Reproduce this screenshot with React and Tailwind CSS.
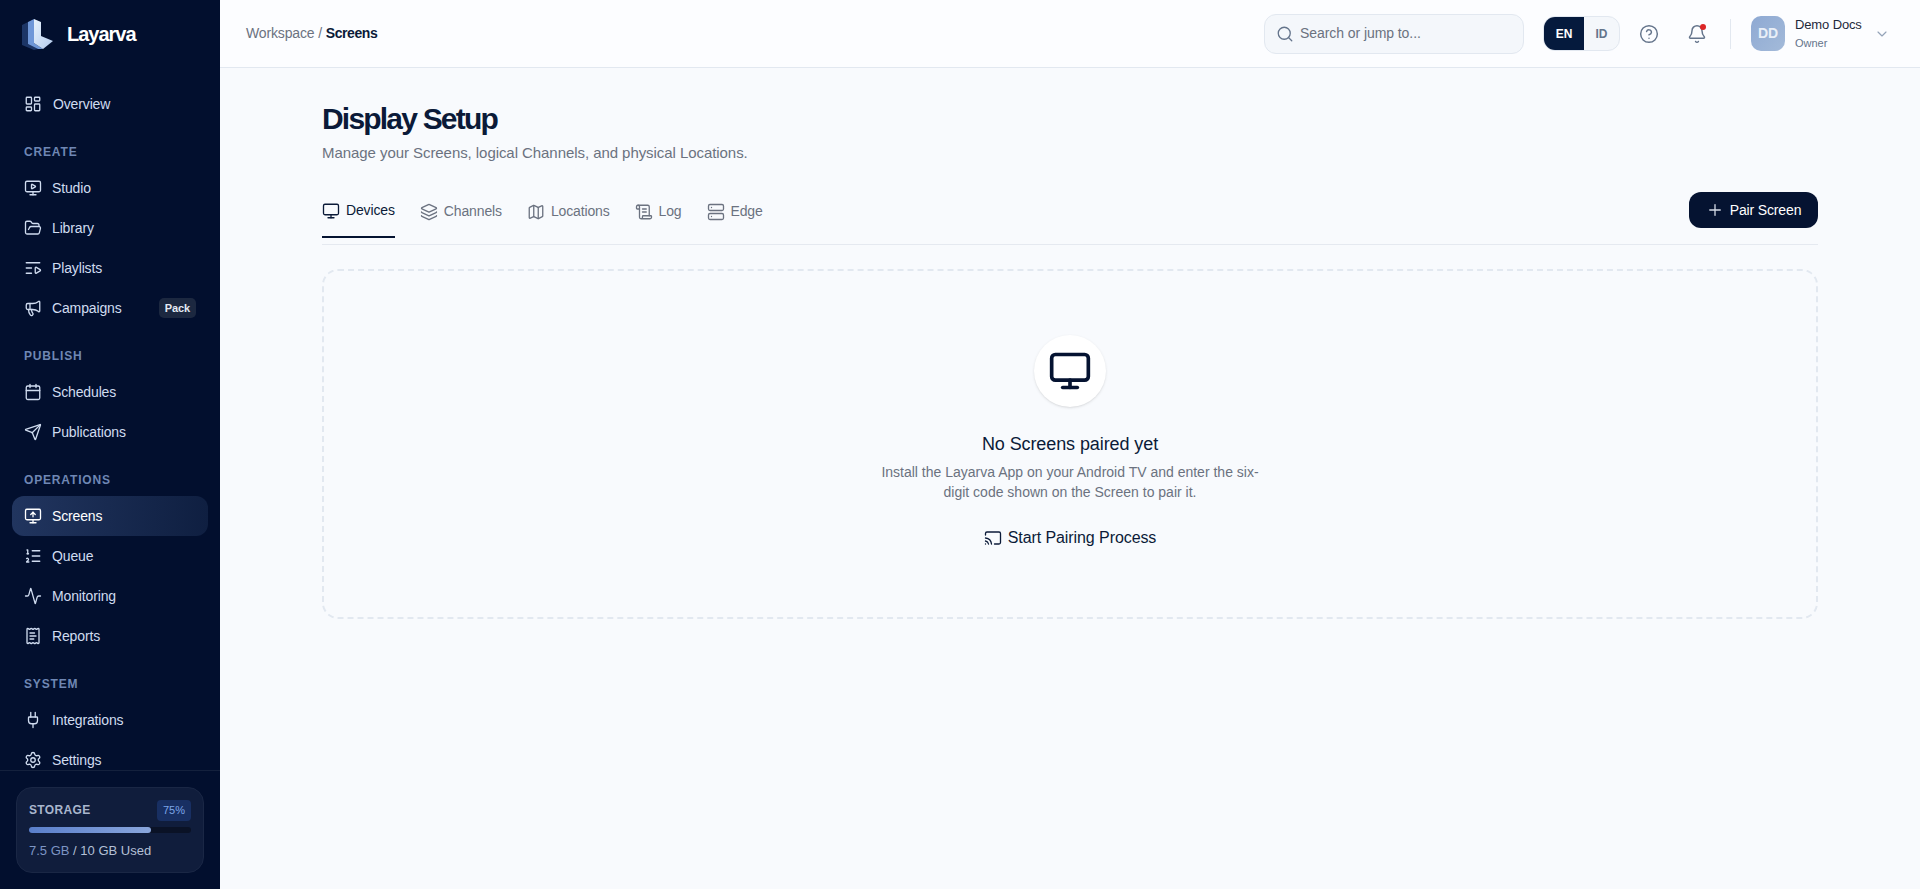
import {
  LayoutDashboard, MonitorPlay, FolderOpen, ListVideo, Megaphone, Calendar, Send, MonitorUp, ListOrdered,
  Activity, ReceiptText, Plug, Settings, Monitor, Layers, Map, ScrollText, Server, Cast, Plus, Search,
  CircleHelp, Bell, ChevronDown,
} from 'lucide-react'

const NAV = [
  { items: [{ label: 'Overview', icon: LayoutDashboard }] },
  {
    title: 'CREATE',
    items: [
      { label: 'Studio', icon: MonitorPlay },
      { label: 'Library', icon: FolderOpen },
      { label: 'Playlists', icon: ListVideo },
      { label: 'Campaigns', icon: Megaphone, badge: 'Pack' },
    ],
  },
  {
    title: 'PUBLISH',
    items: [
      { label: 'Schedules', icon: Calendar },
      { label: 'Publications', icon: Send },
    ],
  },
  {
    title: 'OPERATIONS',
    items: [
      { label: 'Screens', icon: MonitorUp, active: true },
      { label: 'Queue', icon: ListOrdered },
      { label: 'Monitoring', icon: Activity },
      { label: 'Reports', icon: ReceiptText },
    ],
  },
  {
    title: 'SYSTEM',
    items: [
      { label: 'Integrations', icon: Plug },
      { label: 'Settings', icon: Settings },
    ],
  },
]

const TABS = [
  { label: 'Devices', icon: Monitor, active: true },
  { label: 'Channels', icon: Layers },
  { label: 'Locations', icon: Map },
  { label: 'Log', icon: ScrollText },
  { label: 'Edge', icon: Server },
]

function Logo() {
  return (
    <svg width="34" height="32" viewBox="0 0 34 32">
      <defs>
        <linearGradient id="logoFront" x1="0" y1="0" x2="1" y2="1">
          <stop offset="0" stopColor="#e8f2fc" />
          <stop offset="1" stopColor="#b4ccef" />
        </linearGradient>
      </defs>
      <path d="M1 7 L7 4 L7 26 L17 31 L13 32 L1 27 Z" fill="#1c3566" />
      <path d="M7 4 L13 1 L13 25 L22 31 L17 31 L7 26 Z" fill="#6f97d8" />
      <path d="M13 1 L20 4 L20 18 L32 23 L22 31 L13 25 Z" fill="url(#logoFront)" />
    </svg>
  )
}

function Sidebar() {
  return (
    <aside className="w-[220px] h-[889px] shrink-0 bg-[#020f2e] flex flex-col">
      <div className="h-[67px] shrink-0 flex items-center pl-[21px] gap-[12px]">
        <Logo />
        <span className="text-[20px] font-bold tracking-[-0.05em] text-white">Layarva</span>
      </div>
      <nav className="flex-1 min-h-0 overflow-hidden px-3 pt-[17px] border-b border-[#14213d]">
        {NAV.map((group, i) => (
          <div key={i} className="mb-[20px]">
            {group.title && (
              <div className="h-[16px] mb-[8px] pl-3 flex items-center text-[12px] font-bold tracking-[0.07em] text-[#6f87b4]">
                {group.title}
              </div>
            )}
            {group.items.map((item) => (
              <div
                key={item.label}
                className={`h-[40px] flex items-center pl-[12px] pr-3 rounded-xl text-[14px] tracking-[-0.01em] ${
                  item.label === 'Overview' ? 'gap-[11px]' : 'gap-[10px]'
                } ${item.active ? 'bg-gradient-to-r from-[#21355f] to-[#0f1f41] text-white' : 'text-[#d0dcf0]'}`}
              >
                <item.icon size={18} strokeWidth={1.75} className="shrink-0" />
                <span className="flex-1">{item.label}</span>
                {item.badge && (
                  <span className="px-[6px] py-[2px] rounded-[5px] bg-[#1c2840] text-[11px] font-bold text-[#e3e9f3]">
                    {item.badge}
                  </span>
                )}
              </div>
            ))}
          </div>
        ))}
      </nav>
      <div className="h-[118px] shrink-0 px-4 pt-4">
        <div className="h-[86px] rounded-2xl bg-[#101d3c] border border-[#1a2745] px-3 pt-[12px]">
          <div className="flex items-center justify-between">
            <span className="text-[12px] font-bold tracking-[0.03em] text-[#a9b6cd]">STORAGE</span>
            <span className="px-[6px] py-[2px] rounded-[4px] bg-[#182f62] text-[11px] text-[#7ea6e8]">75%</span>
          </div>
          <div className="mt-[6px] h-[6px] rounded-full bg-[#0a1226]">
            <div className="h-full rounded-full bg-gradient-to-r from-[#5a7fcb] to-[#8aa6dc]" style={{ width: '75%' }} />
          </div>
          <div className="mt-[9px] text-[13px] leading-[18px] text-[#b4c0d6]">
            <span className="text-[#7d95c4]">7.5 GB</span> / 10 GB Used
          </div>
        </div>
      </div>
    </aside>
  )
}

function Header() {
  return (
    <header className="h-[68px] shrink-0 bg-[#fcfdff] border-b border-[#e2e8f0] flex items-center pl-[26px] pr-[30px]">
      <div className="text-[14px] tracking-[-0.01em] text-[#6b7280]">
        Workspace / <span className="font-bold tracking-[-0.03em] text-[#0b1a38]">Screens</span>
      </div>
      <div className="ml-auto w-[260px] h-[40px] rounded-xl bg-[#f4f7fb] border border-[#e2e8f0] flex items-center pl-[11px] gap-[6px]">
        <Search size={18} strokeWidth={1.75} className="text-[#64748b]" />
        <span className="text-[14px] tracking-[-0.005em] text-[#6b7280]">Search or jump to...</span>
      </div>
      <div className="ml-[19px] w-[77px] h-[35px] rounded-xl border border-[#e2e8f0] bg-[#f4f7fb] flex overflow-hidden text-[12px] font-bold">
        <div className="w-[40px] bg-[#051a3d] text-white flex items-center justify-center">EN</div>
        <div className="flex-1 text-[#64748b] flex items-center justify-center">ID</div>
      </div>
      <CircleHelp size={20} strokeWidth={1.75} className="ml-[19px] text-[#64748b]" />
      <div className="relative ml-[28px]">
        <Bell size={20} strokeWidth={1.75} className="text-[#64748b]" />
        <span className="absolute top-0 right-[1px] w-[6px] h-[6px] rounded-full bg-[#dc2626]" />
      </div>
      <div className="ml-[23px] w-px h-[30px] bg-[#e2e8f0]" />
      <div className="ml-[20px] w-[34px] h-[35px] rounded-[10px] bg-gradient-to-br from-[#8ea9d3] to-[#a3bad9] flex items-center justify-center text-[14px] font-bold text-[#e9eff8]">
        DD
      </div>
      <div className="ml-[10px] w-[79px]">
        <div className="text-[13px] leading-[16px] tracking-[-0.01em] text-[#1e293b]">Demo Docs</div>
        <div className="mt-[2px] text-[11px] leading-[16px] font-medium text-[#64748b]">Owner</div>
      </div>
      <ChevronDown size={16} strokeWidth={1.75} className="text-[#94a3b8]" />
    </header>
  )
}

export default function App() {
  return (
    <div className="flex h-[889px] overflow-hidden bg-[#f8fafd] font-['Liberation_Sans',Arial,sans-serif]">
      <Sidebar />
      <div className="flex-1 min-w-0 flex flex-col">
        <Header />
        <main className="px-[102px] pt-[32px]">
          <div className="flex flex-col">
            <h1 className="h-[38px] text-[30px] leading-[38px] font-bold tracking-[-0.06em] text-[#0b1a38]">Display Setup</h1>
            <p className="mt-[5px] text-[15px] leading-[20px] tracking-[-0.004em] text-[#6b7280]">
              Manage your Screens, logical Channels, and physical Locations.
            </p>
          </div>
          <div className="mt-[22px] h-[60px] border-b border-[#e5e9f0] flex items-start justify-between">
            <div className="flex gap-[25px] pt-[9px]">
              {TABS.map((tab) => (
                <div
                  key={tab.label}
                  className={`h-[44px] pt-[3px] pb-[12px] flex items-center gap-[6px] text-[14px] tracking-[-0.01em] ${
                    tab.active ? 'border-b-2 border-[#051331] text-[#0b1a38]' : 'text-[#6b7280]'
                  }`}
                >
                  <tab.icon size={18} strokeWidth={1.75} />
                  {tab.label}
                </div>
              ))}
            </div>
            <button className="mt-[7px] h-[36px] w-[129px] rounded-xl bg-[#051331] text-white text-[14px] tracking-[-0.01em] flex items-center justify-center gap-[6px]">
              <Plus size={18} strokeWidth={1.75} className="text-[#d5dbe6]" />
              Pair Screen
            </button>
          </div>
          <div className="mt-[24px] h-[350px] rounded-2xl border-2 border-dashed border-[#e2e8f0] flex flex-col items-center pt-[64px]">
            <div className="w-[72px] h-[72px] rounded-full bg-white shadow-sm flex items-center justify-center">
              <Monitor size={44} strokeWidth={2} className="text-[#051331]" />
            </div>
            <h3 className="mt-[23px] text-[18px] leading-[28px] tracking-[-0.005em] text-[#0b1a38]">No Screens paired yet</h3>
            <p className="mt-[4px] w-[384px] text-center text-[14px] leading-[20px] text-[#6b7280]">
              Install the Layarva App on your Android TV and enter the six-digit code shown on the Screen to pair it.
            </p>
            <div className="mt-[24px] h-[24px] flex items-center gap-[6px] text-[16px] tracking-[-0.005em] text-[#0b1a38]">
              <Cast size={18} strokeWidth={1.75} />
              Start Pairing Process
            </div>
          </div>
        </main>
      </div>
    </div>
  )
}
